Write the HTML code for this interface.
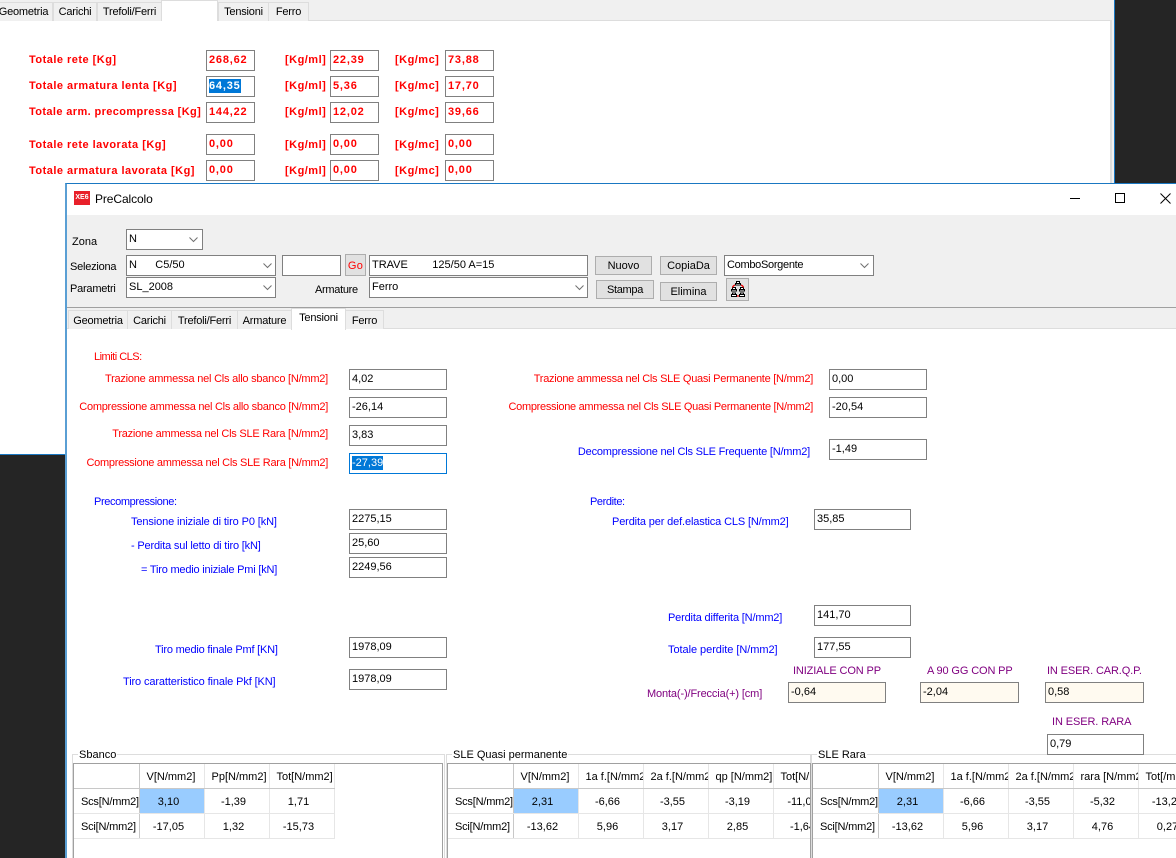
<!DOCTYPE html>
<html><head><meta charset="utf-8"><title>PreCalcolo</title>
<style>
html,body{margin:0;padding:0;background:#252525}
body{position:relative;width:1176px;height:858px;overflow:hidden;font:11px "Liberation Sans",sans-serif;color:#000}
div,svg{position:absolute;box-sizing:border-box}
.t{white-space:nowrap;line-height:14px;letter-spacing:-.23px;margin-top:1px}
.r{color:#f00}.b{color:#00f}.p{color:#800080}
.k{color:#f00;font-weight:bold;letter-spacing:.48px;line-height:14px;white-space:nowrap}
.f{background:#fff;border:1px solid #808080;padding-left:2px;line-height:19px;height:21px;white-space:pre;overflow:hidden}
.fr{color:#f00;font-weight:bold;letter-spacing:.8px;font-size:11px;padding-left:2px}
.y{background:#fffaf0}
.btn{background:#e1e1e1;border:1px solid #adadad;text-align:center;line-height:19px}
.tab{background:#f0f0f0;border:1px solid #ddd;border-bottom:0;text-align:center;line-height:19px;white-space:nowrap;letter-spacing:-.2px}
.on{background:#fff}
table{position:absolute;border-collapse:collapse;table-layout:fixed;font-size:11px}
td{border:1px solid #e6e6e6;border-top:0;border-left:0;width:65px;text-align:center;padding:3px 6px 0 0;overflow:hidden;white-space:nowrap;height:25px;background:#fff;box-sizing:border-box}
td:first-child{border-right:1px solid #c8c8c8;text-align:left;padding-left:7px;padding-right:0;letter-spacing:-.2px}
tr:first-child td{border-bottom:1px solid #c8c8c8;text-align:left;padding-left:7px;padding-right:0}
td.s{background:#9cf}
.grp{border:1px solid #ddd;border-bottom:0}
.gl{background:#fff;padding:0 1px;line-height:12px;white-space:nowrap}
.grid{border:1px solid #a0a0a0;border-bottom:0;background:#fff;overflow:hidden}
.sel{background:#0078d7;color:#fff;display:inline-block;line-height:14px;vertical-align:top;margin-top:2px}
</style></head><body>

<!-- back window -->
<div style="left:0;top:0;width:1114px;height:455px;background:#f0f0f0"></div>
<div style="left:0;top:20px;width:1112px;height:435px;background:#fff;border-top:1px solid #ddd;border-right:2px solid #ddd"></div>
<div style="left:1114px;top:0;width:1px;height:183px;background:#1a78c2"></div>
<div style="left:0;top:454px;width:65px;height:1px;background:#1a78c2"></div>

<div class="tab" style="left:-6px;top:2px;width:59px;height:19px">Geometria</div>
<div class="tab" style="left:53px;top:2px;width:44px;height:19px">Carichi</div>
<div class="tab" style="left:97px;top:2px;width:65px;height:19px">Trefoli/Ferri</div>
<div class="tab on" style="left:161px;top:0;width:57px;height:21px"></div>
<div class="tab" style="left:218px;top:2px;width:51px;height:19px">Tensioni</div>
<div class="tab" style="left:268px;top:2px;width:41px;height:19px">Ferro</div>

<div class="k" style="left:29px;top:53px">Totale rete [Kg]</div>
<div class="k" style="left:29px;top:79px">Totale armatura lenta [Kg]</div>
<div class="k" style="left:29px;top:105px;letter-spacing:.38px">Totale arm. precompressa [Kg]</div>
<div class="k" style="left:29px;top:138px">Totale rete lavorata [Kg]</div>
<div class="k" style="left:29px;top:164px">Totale armatura lavorata [Kg]</div>

<div class="k" style="left:285px;top:53px">[Kg/ml]</div><div class="k" style="left:285px;top:79px">[Kg/ml]</div><div class="k" style="left:285px;top:105px">[Kg/ml]</div><div class="k" style="left:285px;top:138px">[Kg/ml]</div><div class="k" style="left:285px;top:164px">[Kg/ml]</div>
<div class="k" style="left:395px;top:53px">[Kg/mc]</div><div class="k" style="left:395px;top:79px">[Kg/mc]</div><div class="k" style="left:395px;top:105px">[Kg/mc]</div><div class="k" style="left:395px;top:138px">[Kg/mc]</div><div class="k" style="left:395px;top:164px">[Kg/mc]</div>

<div class="f fr" style="left:206px;top:50px;width:49px">268,62</div>
<div class="f fr" style="left:206px;top:76px;width:49px"><span class="sel">64,35</span></div>
<div class="f fr" style="left:206px;top:102px;width:49px">144,22</div>
<div class="f fr" style="left:206px;top:134px;width:49px">0,00</div>
<div class="f fr" style="left:206px;top:160px;width:49px">0,00</div>
<div class="f fr" style="left:330px;top:50px;width:49px">22,39</div>
<div class="f fr" style="left:330px;top:76px;width:49px">5,36</div>
<div class="f fr" style="left:330px;top:102px;width:49px">12,02</div>
<div class="f fr" style="left:330px;top:134px;width:49px">0,00</div>
<div class="f fr" style="left:330px;top:160px;width:49px">0,00</div>
<div class="f fr" style="left:445px;top:50px;width:49px">73,88</div>
<div class="f fr" style="left:445px;top:76px;width:49px">17,70</div>
<div class="f fr" style="left:445px;top:102px;width:49px">39,66</div>
<div class="f fr" style="left:445px;top:134px;width:49px">0,00</div>
<div class="f fr" style="left:445px;top:160px;width:49px">0,00</div>

<!-- front window -->
<div style="left:65px;top:183px;width:1111px;height:675px;background:#fff;border-left:2px solid #5a9fd4;border-top:1px solid #1a78c2"></div>
<div style="left:67px;top:215px;width:1109px;height:113px;background:#f0f0f0"></div>
<div style="left:67px;top:307px;width:1109px;height:1px;background:#a0a0a0"></div>
<div style="left:67px;top:328px;width:1109px;height:1px;background:#ddd"></div>

<div style="left:74px;top:191px;width:16px;height:14px;background:#e8202a;color:#fff;font:bold 7px/14px 'Liberation Sans',sans-serif;text-align:center">XE6</div>
<div class="t" style="left:95px;top:191px;font-size:12px;letter-spacing:-.1px">PreCalcolo</div>
<div style="left:1070px;top:198px;width:10px;height:1px;background:#000"></div>
<div style="left:1115px;top:193px;width:10px;height:10px;border:1px solid #000"></div>
<svg style="left:1160px;top:193px" width="11" height="11" viewBox="0 0 11 11"><path d="M.5.5l10 10M10.500.5l-10 10" stroke="#000" fill="none"/></svg>

<div class="t" style="left:72px;top:234px;letter-spacing:0">Zona</div>
<div class="t" style="left:70px;top:259px">Seleziona</div>
<div class="t" style="left:70px;top:281px">Parametri</div>
<div class="t" style="left:315px;top:282px;letter-spacing:-.3px">Armature</div>

<div class="f" style="left:126px;top:229px;width:77px">N</div>
<div class="f" style="left:126px;top:255px;width:150px">N      C5/50</div>
<div class="f" style="left:126px;top:277px;width:150px">SL_2008</div>
<div class="f" style="left:282px;top:255px;width:59px"></div>
<div class="btn" style="left:345px;top:254px;width:21px;height:22px;color:#f00;line-height:22px;font-size:11px;letter-spacing:.3px">Go</div>
<div class="f" style="left:369px;top:255px;width:219px">TRAVE        125/50 A=15</div>
<div class="f" style="left:369px;top:277px;width:219px">Ferro</div>
<div class="f" style="left:724px;top:255px;width:150px;letter-spacing:-.3px">ComboSorgente</div>
<svg style="left:189px;top:237px" width="9" height="6"><path d="M.5.500l4 4 4-4" stroke="#707070" fill="none"/></svg>
<svg style="left:263px;top:263px" width="9" height="6"><path d="M.5.500l4 4 4-4" stroke="#707070" fill="none"/></svg>
<svg style="left:263px;top:285px" width="9" height="6"><path d="M.5.500l4 4 4-4" stroke="#707070" fill="none"/></svg>
<svg style="left:575px;top:285px" width="9" height="6"><path d="M.5.500l4 4 4-4" stroke="#707070" fill="none"/></svg>
<svg style="left:860px;top:263px" width="9" height="6"><path d="M.5.500l4 4 4-4" stroke="#707070" fill="none"/></svg>

<div class="btn" style="left:595px;top:256px;width:57px;height:19px">Nuovo</div>
<div class="btn" style="left:596px;top:280px;width:58px;height:19px;letter-spacing:-.3px">Stampa</div>
<div class="btn" style="left:660px;top:256px;width:57px;height:19px">CopiaDa</div>
<div class="btn" style="left:660px;top:282px;width:57px;height:19px">Elimina</div>
<div class="btn" style="left:726px;top:278px;width:23px;height:23px"></div>
<svg style="left:729px;top:280px" width="18" height="20" viewBox="0 0 18 20"><g fill="#fff" stroke="#000" stroke-width="1"><rect x="7.500" y="1.500" width="3" height="2"/><rect x="6.500" y="3.500" width="5" height="1.500"/><rect x="3.500" y="7.500" width="3" height="2"/><rect x="2.500" y="9.500" width="5" height="1.500"/><rect x="11.500" y="7.500" width="3" height="2"/><rect x="10.500" y="9.500" width="5" height="1.500"/><rect x="3.500" y="13" width="3" height="1.500"/><rect x="2.500" y="14.500" width="5" height="2"/><rect x="11.500" y="13" width="3" height="1.500"/><rect x="10.500" y="14.500" width="5" height="2"/></g><path d="M6 5C4.500 5.500 3.800 6.500 3.500 7.500M12 5c1.500.5 2.200 1.500 2.500 2.500M8 16h2" fill="none" stroke="#e00" stroke-width="1.300"/></svg>

<div class="tab" style="left:68px;top:310px;width:60px;height:19px;line-height:20px">Geometria</div>
<div class="tab" style="left:127px;top:310px;width:45px;height:19px;line-height:20px">Carichi</div>
<div class="tab" style="left:171px;top:310px;width:67px;height:19px;line-height:20px">Trefoli/Ferri</div>
<div class="tab" style="left:237px;top:310px;width:55px;height:19px;line-height:20px">Armature</div>
<div class="tab on" style="left:291px;top:308px;width:55px;height:22px;border-bottom:0;line-height:19px">Tensioni</div>
<div class="tab" style="left:345px;top:310px;width:39px;height:19px;line-height:20px">Ferro</div>

<!-- labels -->
<div class="t r" style="left:94px;top:349px;letter-spacing:-.5px">Limiti CLS:</div>
<div class="t r" style="right:848px;top:371px">Trazione ammessa nel Cls allo sbanco [N/mm2]</div>
<div class="t r" style="right:848px;top:399px;letter-spacing:-.27px">Compressione ammessa nel Cls allo sbanco [N/mm2]</div>
<div class="t r" style="right:848px;top:426px">Trazione ammessa nel Cls SLE Rara [N/mm2]</div>
<div class="t r" style="right:848px;top:455px;letter-spacing:-.27px">Compressione ammessa nel Cls SLE Rara [N/mm2]</div>
<div class="t r" style="right:363px;top:371px;letter-spacing:-.26px">Trazione ammessa nel Cls SLE Quasi Permanente [N/mm2]</div>
<div class="t r" style="right:363px;top:399px;letter-spacing:-.3px">Compressione ammessa nel Cls SLE Quasi Permanente [N/mm2]</div>
<div class="t b" style="right:366px;top:444px;letter-spacing:-.2px">Decompressione nel Cls SLE Frequente [N/mm2]</div>
<div class="t b" style="left:94px;top:494px;letter-spacing:-.37px">Precompressione:</div>
<div class="t b" style="left:590px;top:494px;letter-spacing:-.4px">Perdite:</div>
<div class="t b" style="left:131px;top:514px;letter-spacing:-.12px">Tensione iniziale di tiro P0 [kN]</div>
<div class="t b" style="left:131px;top:538px;letter-spacing:-.17px">- Perdita sul letto di tiro [kN]</div>
<div class="t b" style="left:141px;top:562px;letter-spacing:-.2px">= Tiro medio iniziale Pmi [kN]</div>
<div class="t b" style="left:612px;top:514px;letter-spacing:-.14px">Perdita per def.elastica CLS [N/mm2]</div>
<div class="t b" style="left:668px;top:610px;letter-spacing:-.17px">Perdita differita [N/mm2]</div>
<div class="t b" style="left:668px;top:642px;letter-spacing:-.05px">Totale perdite [N/mm2]</div>
<div class="t b" style="left:155px;top:642px;letter-spacing:-.2px">Tiro medio finale Pmf [KN]</div>
<div class="t b" style="left:123px;top:674px;letter-spacing:-.12px">Tiro caratteristico finale Pkf [KN]</div>
<div class="t p" style="left:647px;top:686px;letter-spacing:-.13px">Monta(-)/Freccia(+) [cm]</div>
<div class="t p" style="left:793px;top:663px;letter-spacing:-.13px">INIZIALE CON PP</div>
<div class="t p" style="left:927px;top:663px;letter-spacing:-.13px">A 90 GG CON PP</div>
<div class="t p" style="left:1047px;top:663px;letter-spacing:-.13px">IN ESER. CAR.Q.P.</div>
<div class="t p" style="left:1052px;top:714px;letter-spacing:-.1px">IN ESER. RARA</div>

<!-- fields -->
<div class="f" style="left:349px;top:369px;width:98px">4,02</div>
<div class="f" style="left:349px;top:397px;width:98px">-26,14</div>
<div class="f" style="left:349px;top:425px;width:98px">3,83</div>
<div class="f" style="left:349px;top:453px;width:98px;border-color:#0078d7"><span class="sel">-27,39</span></div>
<div class="f" style="left:829px;top:369px;width:98px">0,00</div>
<div class="f" style="left:829px;top:397px;width:98px">-20,54</div>
<div class="f" style="left:829px;top:439px;width:98px">-1,49</div>
<div class="f" style="left:349px;top:509px;width:98px">2275,15</div>
<div class="f" style="left:349px;top:533px;width:98px">25,60</div>
<div class="f" style="left:349px;top:557px;width:98px">2249,56</div>
<div class="f" style="left:814px;top:509px;width:97px">35,85</div>
<div class="f" style="left:814px;top:605px;width:97px">141,70</div>
<div class="f" style="left:814px;top:637px;width:97px">177,55</div>
<div class="f" style="left:349px;top:637px;width:98px">1978,09</div>
<div class="f" style="left:349px;top:669px;width:98px">1978,09</div>
<div class="f y" style="left:788px;top:682px;width:98px">-0,64</div>
<div class="f y" style="left:920px;top:682px;width:99px">-2,04</div>
<div class="f y" style="left:1045px;top:682px;width:99px">0,58</div>

<!-- groups -->
<div class="grp" style="left:72px;top:754px;width:373px;height:104px"></div>
<div class="grp" style="left:446px;top:754px;width:365px;height:104px"></div>
<div class="grp" style="left:811px;top:754px;width:366px;height:104px"></div>
<div class="gl" style="left:78px;top:749px">Sbanco</div>
<div class="gl" style="left:452px;top:749px">SLE Quasi permanente</div>
<div class="gl" style="left:817px;top:749px">SLE Rara</div>
<div class="f" style="left:1047px;top:734px;width:97px">0,79</div>

<div class="grid" style="left:73px;top:763px;width:370px;height:95px">
<table style="left:0;top:-1px;width:260px"><tr><td></td><td>V[N/mm2]</td><td>Pp[N/mm2]</td><td>Tot[N/mm2]</td></tr>
<tr><td>Scs[N/mm2]</td><td class="s">3,10</td><td>-1,39</td><td>1,71</td></tr>
<tr><td>Sci[N/mm2]</td><td>-17,05</td><td>1,32</td><td>-15,73</td></tr></table></div>

<div class="grid" style="left:447px;top:763px;width:364px;height:95px">
<table style="left:0;top:-1px;width:390px"><tr><td></td><td>V[N/mm2]</td><td>1a f.[N/mm2]</td><td>2a f.[N/mm2]</td><td>qp [N/mm2]</td><td>Tot[N/mm2]</td></tr>
<tr><td>Scs[N/mm2]</td><td class="s">2,31</td><td>-6,66</td><td>-3,55</td><td>-3,19</td><td>-11,09</td></tr>
<tr><td>Sci[N/mm2]</td><td>-13,62</td><td>5,96</td><td>3,17</td><td>2,85</td><td>-1,64</td></tr></table></div>

<div class="grid" style="left:812px;top:763px;width:364px;height:95px;border-right:0">
<table style="left:0;top:-1px;width:390px"><tr><td></td><td>V[N/mm2]</td><td>1a f.[N/mm2]</td><td>2a f.[N/mm2]</td><td>rara [N/mm2]</td><td>Tot[/mm2]</td></tr>
<tr><td>Scs[N/mm2]</td><td class="s">2,31</td><td>-6,66</td><td>-3,55</td><td>-5,32</td><td>-13,23</td></tr>
<tr><td>Sci[N/mm2]</td><td>-13,62</td><td>5,96</td><td>3,17</td><td>4,76</td><td>0,27</td></tr></table></div>

</body></html>
